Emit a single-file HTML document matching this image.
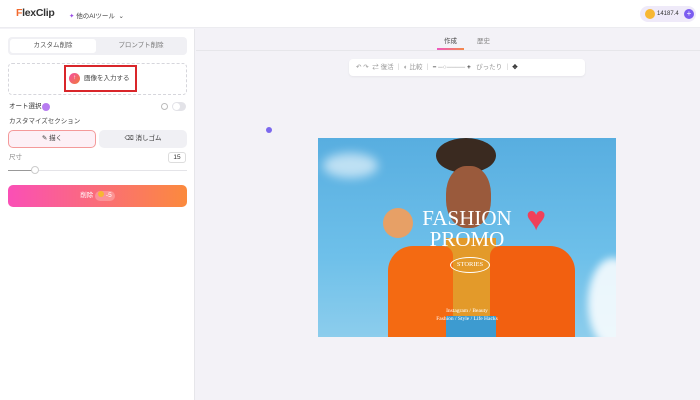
<!DOCTYPE html>
<html><head><meta charset="utf-8"><style>
*{box-sizing:border-box;margin:0;padding:0}
body{width:700px;height:400px;overflow:hidden;background:#f3f2f7;font-family:"Liberation Sans","Noto Sans CJK JP",sans-serif;position:relative;color:#333}
.a{position:absolute}
</style></head><body>
<div class="a" style="left:0;top:0;width:700px;height:28px;background:#fff;border-bottom:1px solid #ececf0"></div>
<div class="a" style="left:16px;top:7px;font-size:10.5px;font-weight:bold;color:#333;letter-spacing:-0.3px"><span style="color:#f26a2e">F</span>lexClip</div>
<div class="a" style="left:69px;top:10px;font-size:6.5px;color:#444"><span style="color:#9b4de8">✦</span> 他のAIツール &nbsp;⌄</div>
<div class="a" style="left:640px;top:6px;width:56px;height:16px;border-radius:8px;background:#efeaf9"></div>
<div class="a" style="left:645px;top:9px;width:10px;height:10px;border-radius:50%;background:#f7b733"></div>
<div class="a" style="left:657px;top:11px;font-size:6px;color:#333;line-height:7px">14187.4</div>
<div class="a" style="left:684px;top:9px;width:10px;height:10px;border-radius:50%;background:#7b5cf0;color:#fff;font-size:8px;line-height:10px;text-align:center">+</div>
<!-- left panel -->
<div class="a" style="left:0;top:29px;width:195px;height:371px;background:#fff;border-right:1px solid #e6e6ea"></div>
<div class="a" style="left:8px;top:37px;width:179px;height:18px;border-radius:4px;background:#f0f0f4"></div>
<div class="a" style="left:10px;top:39px;width:86px;height:14px;border-radius:3px;background:#fff;font-size:6.5px;text-align:center;line-height:14px;color:#555">カスタム削除</div>
<div class="a" style="left:97px;top:39px;width:88px;height:14px;font-size:6.5px;text-align:center;line-height:14px;color:#777">プロンプト削除</div>
<div class="a" style="left:8px;top:63px;width:179px;height:32px;border:1px dashed #d6d6dc;border-radius:4px"></div>
<div class="a" style="left:64px;top:65px;width:73px;height:27px;border:2.5px solid #d9262a"></div>
<div class="a" style="left:69px;top:73px;width:11px;height:11px;border-radius:50%;background:linear-gradient(135deg,#f54ea2,#f07a3a);color:#fff;font-size:6px;text-align:center;line-height:11px">↑</div>
<div class="a" style="left:84px;top:74px;font-size:6.5px;color:#444;line-height:9px">画像を入力する</div>
<div class="a" style="left:9px;top:102px;font-size:6.5px;color:#333;line-height:9px">オート選択</div>
<div class="a" style="left:42px;top:103px;width:8px;height:8px;border-radius:50%;background:#b77cf0"></div>
<div class="a" style="left:161px;top:103px;width:7px;height:7px;border-radius:50%;border:1px solid #bbb"></div>
<div class="a" style="left:172px;top:102px;width:14px;height:9px;border-radius:5px;background:#e3e3e8"></div>
<div class="a" style="left:173px;top:103px;width:7px;height:7px;border-radius:50%;background:#fff"></div>
<div class="a" style="left:9px;top:117px;font-size:6.5px;color:#444;line-height:9px">カスタマイズセクション</div>
<div class="a" style="left:8px;top:130px;width:88px;height:18px;border-radius:5px;border:1px solid #f49a9a;background:#fdf0f6;font-size:6.5px;text-align:center;line-height:16px">✎ 描く</div>
<div class="a" style="left:99px;top:130px;width:88px;height:18px;border-radius:5px;background:#f0f0f4;font-size:6.5px;text-align:center;line-height:18px">⌫ 消しゴム</div>
<div class="a" style="left:9px;top:153px;font-size:6.5px;color:#888;line-height:9px">尺寸</div>
<div class="a" style="left:168px;top:152px;width:18px;height:11px;border:1px solid #ddd;border-radius:3px;font-size:6.5px;text-align:center;line-height:9px">15</div>
<div class="a" style="left:8px;top:170px;width:179px;height:1px;background:#e4e4e8"></div>
<div class="a" style="left:8px;top:170px;width:27px;height:1px;background:#999"></div>
<div class="a" style="left:31px;top:166px;width:8px;height:8px;border-radius:50%;background:#fff;border:1px solid #ccc"></div>
<div class="a" style="left:8px;top:185px;width:179px;height:22px;border-radius:5px;background:linear-gradient(90deg,#fa4fb6,#fb8a3d);color:#fff;font-size:6.5px;text-align:center;line-height:22px">削除 <span style="display:inline-block;background:rgba(255,255,255,.25);border-radius:6px;padding:0 3px;line-height:10px"><span style="display:inline-block;width:6px;height:6px;border-radius:50%;background:#f7b733"></span> -5</span></div>
<!-- tabs -->
<div class="a" style="left:196px;top:29px;width:504px;height:22px;border-bottom:1px solid #e6e6ea"></div>
<div class="a" style="left:444px;top:35px;font-size:6.5px;color:#444">作成</div>
<div class="a" style="left:477px;top:35px;font-size:6.5px;color:#888">歴史</div>
<div class="a" style="left:437px;top:48px;width:27px;height:2px;background:linear-gradient(90deg,#ee5ac0,#f3884a)"></div>
<div class="a" style="left:349px;top:59px;width:236px;height:17px;border-radius:4px;background:#fff;box-shadow:0 1px 2px rgba(0,0,0,.06);font-size:6.5px;color:#999;line-height:17px;padding-left:7px;white-space:nowrap">↶ ↷ &nbsp;⇄ 復活 ｜ ◐ 比較 ｜ <b style="color:#333">−</b> ─○──── <b style="color:#333">+</b> &nbsp;&nbsp;ぴったり ｜ <b style="color:#333">✥</b></div>
<div class="a" style="left:266px;top:127px;width:6px;height:6px;border-radius:50%;background:#7b68ee"></div>
<!-- image -->
<div class="a" style="left:318px;top:138px;width:298px;height:199px;overflow:hidden;background:linear-gradient(180deg,#58aee0,#6ec0ea 60%,#8ccdec)">
<div class="a" style="left:5px;top:15px;width:55px;height:25px;border-radius:50%;background:rgba(255,255,255,.6);filter:blur(5px)"></div>
<div class="a" style="left:270px;top:120px;width:50px;height:90px;border-radius:50%;background:rgba(255,255,255,.85);filter:blur(4px)"></div>
<div class="a" style="left:118px;top:0;width:60px;height:35px;border-radius:50%;background:#3a2a20"></div>
<div class="a" style="left:128px;top:28px;width:45px;height:62px;border-radius:45%;background:#9a5a3c"></div>
<div class="a" style="left:128px;top:100px;width:50px;height:100px;background:#e39a2a"></div>
<div class="a" style="left:70px;top:108px;width:65px;height:95px;background:#f46a12;border-radius:25px 10px 0 0"></div>
<div class="a" style="left:172px;top:108px;width:85px;height:95px;background:#f26010;border-radius:10px 25px 0 0"></div>
<div class="a" style="left:128px;top:178px;width:50px;height:25px;background:#3d9bd0"></div>
<div class="a" style="left:65px;top:70px;width:30px;height:30px;border-radius:50%;background:#e7a066"></div>
<div class="a" style="left:208px;top:64px;color:#f0405a;font-size:34px;line-height:34px">♥</div>
<div class="a" style="left:0;top:70px;width:298px;text-align:center;color:#fff;font-family:'Liberation Serif',serif;font-size:21px;line-height:21px">FASHION<br>PROMO</div>
<div class="a" style="left:132px;top:119px;width:40px;height:16px;border:1px solid #fff;border-radius:50%;color:#fff;font-family:'Liberation Serif',serif;font-size:6.5px;text-align:center;line-height:14px">STORIES</div>
<div class="a" style="left:0;top:169px;width:298px;text-align:center;color:#fff;font-family:'Liberation Serif',serif;font-size:5.5px;line-height:8px">Instagram / Beauty<br>Fashion / Style / Life Hacks</div>
</div>
</body></html>
